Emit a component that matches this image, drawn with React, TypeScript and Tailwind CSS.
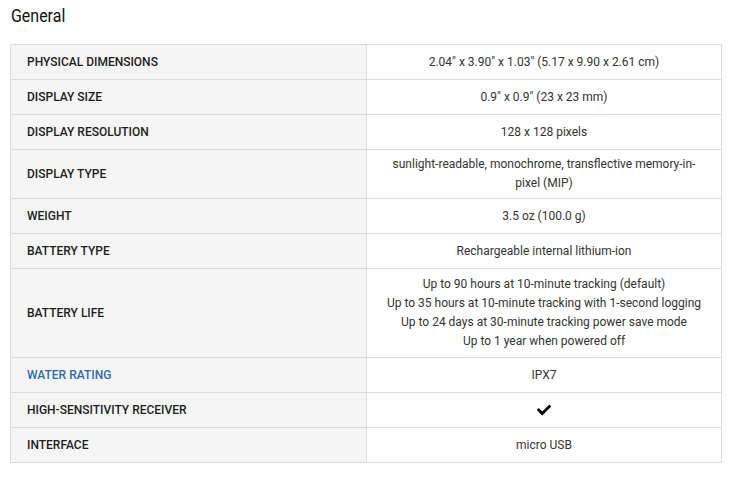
import { FaCheck } from "react-icons/fa";

type Spec = {
    label: string;
    value: React.ReactNode;
    height: string;
    accent?: boolean;
};

const specs: Spec[] = [
    { label: "Physical dimensions", value: "2.04\u2033 x 3.90\u2033 x 1.03\u2033 (5.17 x 9.90 x 2.61 cm)", height: "h-[34px]" },
    { label: "Display size", value: "0.9\" x 0.9\" (23 x 23 mm)", height: "h-[34px]" },
    { label: "Display resolution", value: "128 x 128 pixels", height: "h-[34px]" },
    {
        label: "Display type",
        value: <>sunlight-readable, monochrome, transflective memory-in-<br />pixel (MIP)</>,
        height: "h-[48px]",
    },
    { label: "Weight", value: "3.5 oz (100.0 g)", height: "h-[34px]" },
    { label: "Battery type", value: "Rechargeable internal lithium-ion", height: "h-[34px]" },
    {
        label: "Battery life",
        value: (
            <>
                Up to 90 hours at 10-minute tracking (default)<br />
                Up to 35 hours at 10-minute tracking with 1-second logging<br />
                Up to 24 days at 30-minute tracking power save mode<br />
                Up to 1 year when powered off
            </>
        ),
        height: "h-[88px]",
    },
    { label: "Water rating", value: "IPX7", height: "h-[34px]", accent: true },
    { label: "High-sensitivity receiver", value: <FaCheck className="inline-block w-[14px] h-[14px] text-black" />, height: "h-[34px]" },
    { label: "Interface", value: "micro USB", height: "h-[34px]" },
];

export default function App() {
    return (
        <div className="w-[734px] h-[477px] bg-white px-[10px] pt-[4px]" style={{ fontFamily: "Roboto, 'Liberation Sans', sans-serif" }}>
            {/* condensed heading */}
            <h2 className="text-[19px] leading-[23px] text-[#111] pl-px mb-[17px]">
                <span className="inline-block origin-left scale-x-[0.84]">General</span>
            </h2>
            <div className="w-[712px] border border-[#dcdcdc]">
                {specs.map((spec, i) => (
                    <div key={spec.label} className={`flex ${i > 0 ? "border-t border-[#dcdcdc]" : ""}`}>
                        <div className={`w-[356px] ${spec.height} bg-[#f5f5f5] border-r border-[#dcdcdc] flex items-center pl-4`}>
                            <span className={`uppercase text-[12px] font-medium ${spec.accent ? "text-[#2b6da6]" : "text-[#1d1d1d]"}`}>
                                {spec.label}
                            </span>
                        </div>
                        <div className={`flex-1 ${spec.height} flex items-center justify-center text-center text-[12px] leading-[19px] text-[#333] px-4`}>
                            <div>{spec.value}</div>
                        </div>
                    </div>
                ))}
            </div>
        </div>
    );
}
